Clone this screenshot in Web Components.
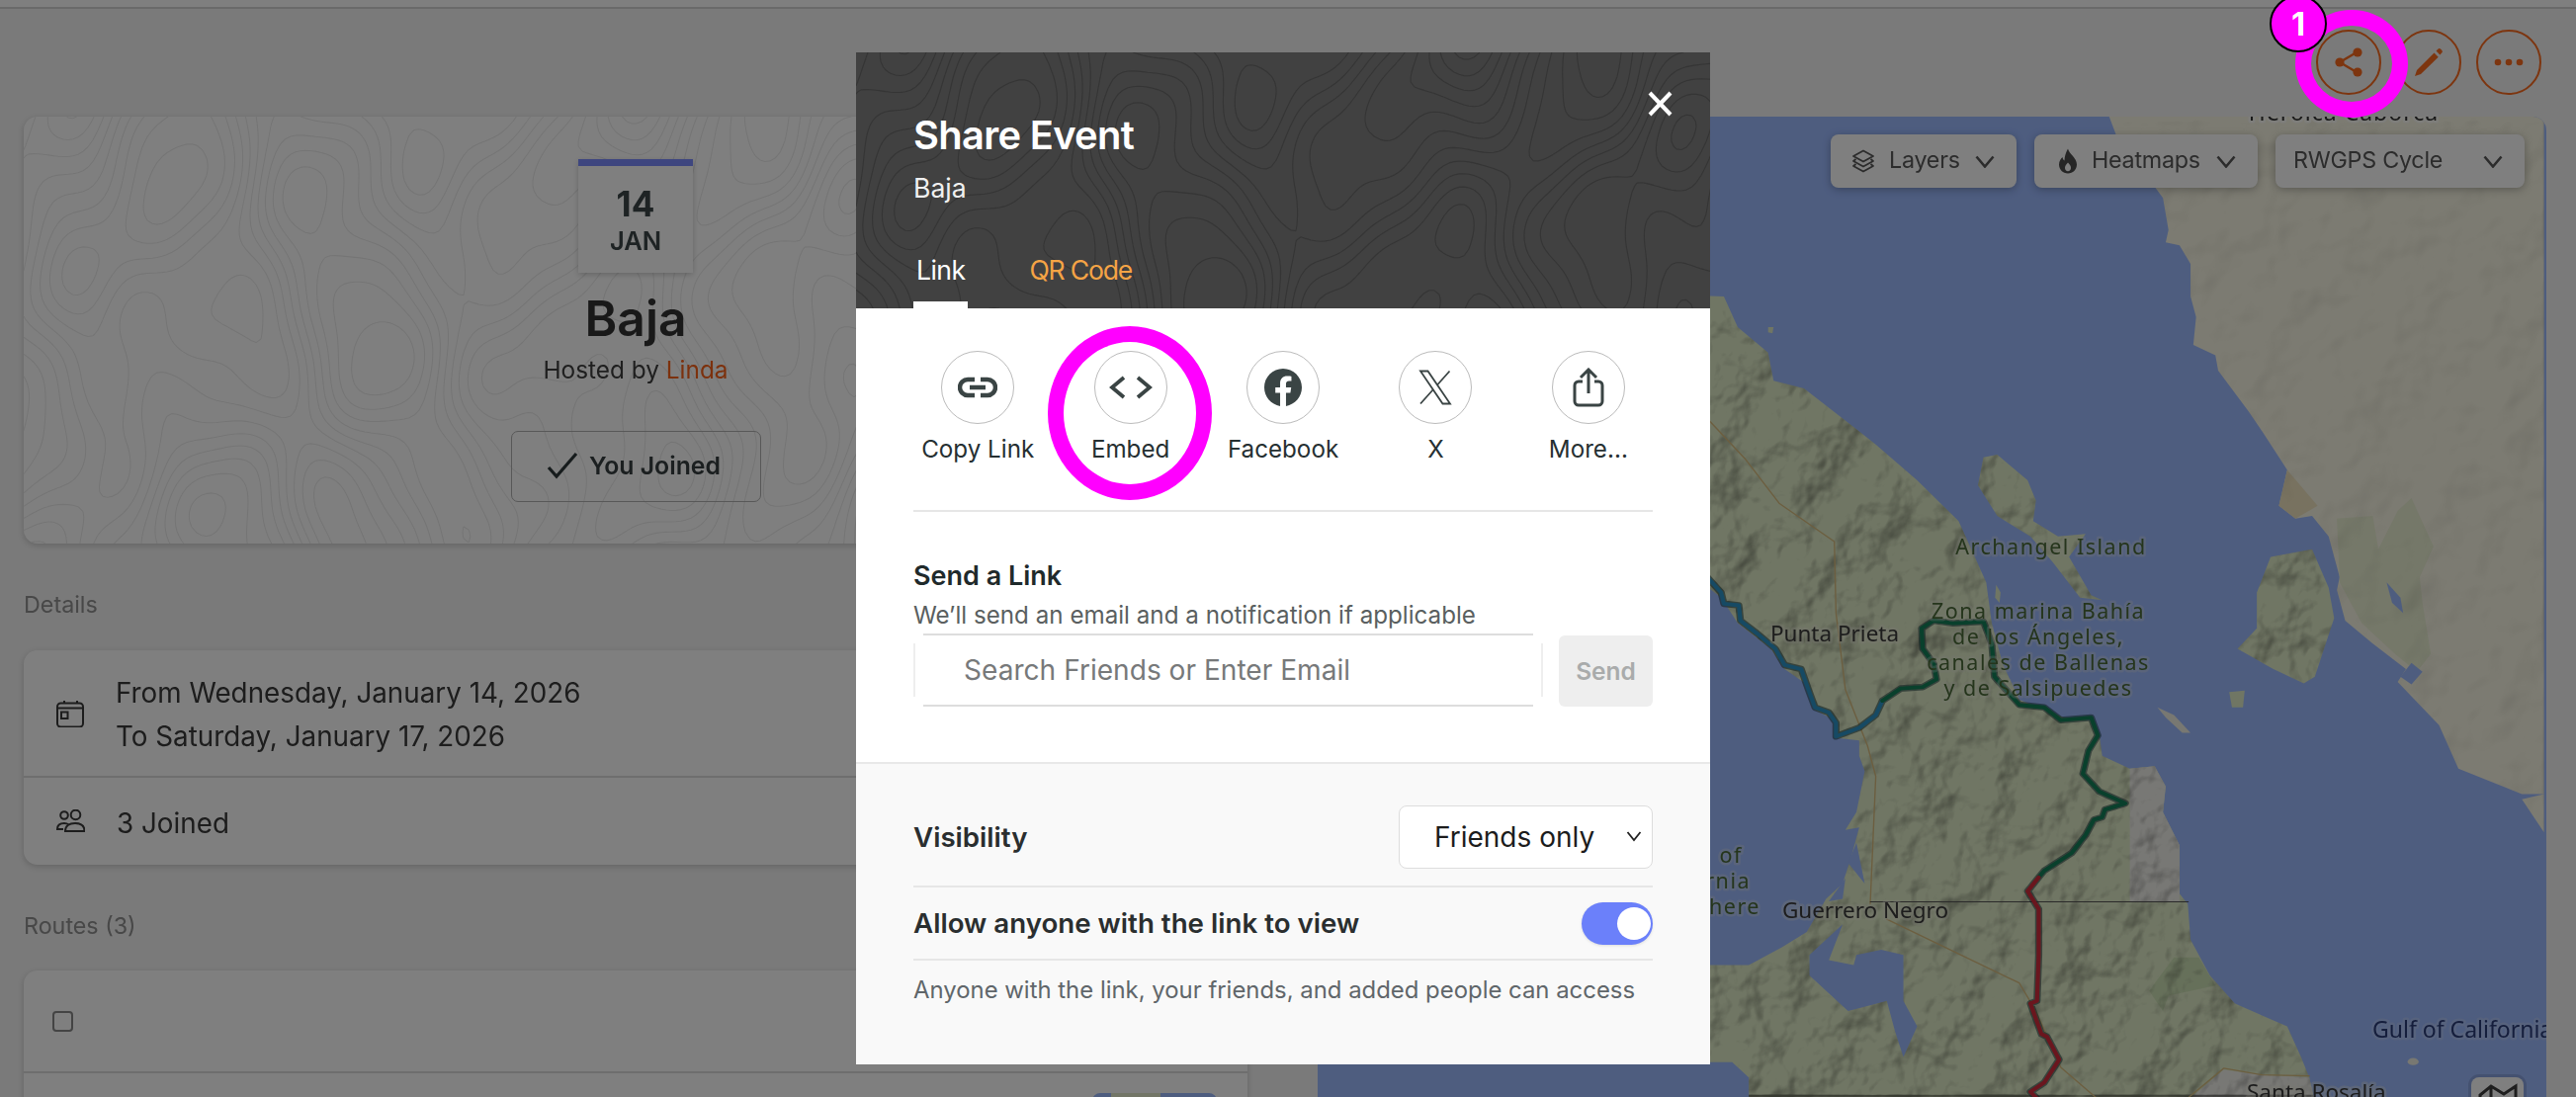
<!DOCTYPE html>
<html lang="en"><head><meta charset="utf-8"><title>Share Event</title>
<style>
html,body{margin:0;padding:0;height:1110px;overflow:hidden;background:#f4f4f4;font-family:Inter,"Liberation Sans",sans-serif}
</style></head><body>
<app-page>
  <top-actions></top-actions>
  <div slot="left">
    <hero-card></hero-card>
    <section-label>Details</section-label>
    <details-card></details-card>
    <section-label style="margin-top:46px">Routes (3)</section-label>
    <routes-card style="margin-top:29px"></routes-card>
  </div>
  <baja-map slot="right"></baja-map>
</app-page>
<dim-overlay></dim-overlay>
<share-dialog></share-dialog>
<callout-ring style="left:1060px;top:330px;width:166px;height:176px"></callout-ring>
<callout-ring style="left:2322px;top:10px;width:114px;height:109px"><step-badge>1</step-badge></callout-ring>
<script>
const FONT='font-family:Inter,"Liberation Sans",sans-serif;';
function topoPath(w,h,ox,oy){
  const s=5,f=(x,y)=>{x=(x+ox)*.88;y=(y+oy)*.8;return Math.sin(x*.016+1.1+1.4*Math.sin(y*.006+.5))*Math.cos(y*.011+.7+Math.sin(x*.009))
    +.5*Math.sin(x*.031+y*.007+2)*Math.sin(y*.023-x*.006+1)+.16*Math.sin(x*.057+y*.021)*Math.cos(y*.043-x*.019)};
  const cols=Math.ceil(w/s)+1,rows=Math.ceil(h/s)+1,g=[];
  for(let j=0;j<=rows;j++){g[j]=[];for(let i=0;i<=cols;i++)g[j][i]=f(i*s,j*s)}
  let d='';
  for(let l=-1.62;l<1.7;l+=.21){
    for(let j=0;j<rows;j++)for(let i=0;i<cols;i++){
      const a=g[j][i],b=g[j][i+1],c=g[j+1][i+1],e=g[j+1][i],p=[];
      const t=(u,v)=>(l-u)/(v-u);
      if((a<l)!==(b<l))p.push([(i+t(a,b))*s,j*s]);
      if((b<l)!==(c<l))p.push([(i+1)*s,(j+t(b,c))*s]);
      if((e<l)!==(c<l))p.push([(i+t(e,c))*s,(j+1)*s]);
      if((a<l)!==(e<l))p.push([i*s,(j+t(a,e))*s]);
      if(p.length>=2)d+=`M${p[0][0].toFixed(1)} ${p[0][1].toFixed(1)}L${p[1][0].toFixed(1)} ${p[1][1].toFixed(1)}`;
      if(p.length==4)d+=`M${p[2][0].toFixed(1)} ${p[2][1].toFixed(1)}L${p[3][0].toFixed(1)} ${p[3][1].toFixed(1)}`;
    }
  }
  return d;
}
function el(name,html){
  customElements.define(name,class extends HTMLElement{
    constructor(){super();this.attachShadow({mode:'open'}).innerHTML=html(this)}
  });
}
el('app-page',()=>`<style>
:host{display:grid;grid-template-columns:1238px 1243px;column-gap:71px;grid-template-rows:118px 992px;padding-left:24px;height:1110px;box-sizing:border-box;width:2606px;overflow:hidden}
.top{grid-column:1 / -1;margin:0 -30px 0 -24px}
</style><div class="top"><slot></slot></div><div class="l"><slot name="left"></slot></div><div class="r"><slot name="right"></slot></div>`);
el('top-actions',()=>`<style>
:host{display:block;height:118px;box-sizing:border-box;background:linear-gradient(#fff 0 7px,#d4d4d4 7px 9px,transparent 9px)}
.row{display:flex;justify-content:flex-end;gap:15px;padding:30px 35px 0 0}
.b{width:66px;height:66px;border:2px solid #fa6a1e;border-radius:50%;box-sizing:border-box;display:flex;align-items:center;justify-content:center}
svg{display:block}
</style><div class="row">
<div class="b"><svg width="32" height="32" viewBox="0 0 32 32"><path d="M24 6 7 16l17 10" fill="none" stroke="#fa6a1e" stroke-width="2.4"/><circle cx="25" cy="6" r="4.6" fill="#fa6a1e"/><circle cx="7" cy="16" r="4.6" fill="#fa6a1e"/><circle cx="25" cy="26" r="4.6" fill="#fa6a1e"/></svg></div>
<div class="b"><svg width="32" height="32" viewBox="0 0 32 32"><path d="M2 30l2-6L21.500 6.500l4.200 4.200L8 28z" fill="#fa6a1e"/><path d="M23.500 4.500l1.800-1.800a2 2 0 0 1 2.900 0l1 1a2 2 0 0 1 0 2.900l-1.800 1.800z" fill="#fa6a1e"/></svg></div>
<div class="b"><svg width="32" height="10" viewBox="0 0 32 10"><circle cx="5" cy="5" r="3.300" fill="#fa6a1e"/><circle cx="16" cy="5" r="3.300" fill="#fa6a1e"/><circle cx="27" cy="5" r="3.300" fill="#fa6a1e"/></svg></div>
</div>`);
el('topo-lines',h=>{const c=h.getAttribute('color')||'#ebebeb';const w=+h.getAttribute('w'),ht=+h.getAttribute('h');
return `<style>:host{position:absolute;inset:0;display:block;overflow:hidden;pointer-events:none}</style>
<svg width="${w}" height="${ht}" viewBox="0 0 ${w} ${ht}"><path d="${topoPath(w,ht,+h.getAttribute('ox')||0,+h.getAttribute('oy')||0)}" fill="none" stroke="${c}" stroke-width="1.100"/></svg>`});
el('hero-card',()=>`<style>
:host{display:flex;flex-direction:column;align-items:center;position:relative;height:432px;padding-top:43px;box-sizing:border-box;background:#fff;border-radius:14px;box-shadow:0 2px 6px rgba(0,0,0,.18);overflow:hidden;color:#3a3a3a}
.in{position:relative;display:flex;flex-direction:column;align-items:center}
.date{width:116px;height:115px;box-sizing:border-box;border-top:7px solid #7c8cff;background:#fff;box-shadow:0 2px 6px rgba(0,0,0,.2);text-align:center;color:#3c4648;padding-top:18px}
.d{font-size:35px;font-weight:700;line-height:40px}.m{font-size:25.500px;font-weight:600;line-height:30px;margin-top:3px}
h1{font-size:49.800px;font-weight:600;line-height:60px;margin:16px 0 0;color:#333}
.host{font-size:24.400px;line-height:34px;margin-top:5px;color:#3f3f3f}.host b{font-weight:400;color:#f8621a}
.btn{margin-top:45px;width:253px;height:72px;box-sizing:border-box;border:1.500px solid #b0b0b0;border-radius:7px;display:flex;align-items:center;justify-content:center;gap:10px;font-size:24.800px;font-weight:600;color:#363e40;padding:0 4px 2px 0}
</style><topo-lines w="1240" h="440" ox="30" oy="60"></topo-lines><div class="in"><div class="date"><div class="d">14</div><div class="m">JAN</div></div>
<h1>Baja</h1><div class="host">Hosted by <b>Linda</b></div>
<div class="btn"><svg width="33" height="28" viewBox="0 0 33 28"><path d="M2 16l8 9L30 2" fill="none" stroke="#2f393b" stroke-width="3.200"/></svg><span>You Joined</span></div></div>`);
el('section-label',()=>`<style>:host{display:block;font-size:23.300px;line-height:32px;color:#909090;margin-top:46px}</style><slot></slot>`);
el('details-card',()=>`<style>
:host{display:block;margin-top:30px;background:#fff;border-radius:14px;box-shadow:0 2px 6px rgba(0,0,0,.18);color:#3a3a3a;font-size:27.800px;line-height:44px}
.r{display:flex;align-items:center;padding-left:33px;gap:32px;box-sizing:border-box}
.a{height:129px;border-bottom:2px solid #ddd}.a>div{padding-top:3px}.b{height:88px}.b>div{padding-top:3px}
svg{display:block;flex:none}
</style><div class="r a"><svg width="28" height="28" viewBox="0 0 28 28" fill="none" stroke="#3a3a3a" stroke-width="2"><rect x="1" y="3.500" width="26" height="24" rx="3.500"/><path d="M1 8.500h26M8 1v3M21 1v3"/><rect x="5" y="12.500" width="6.500" height="6.500"/></svg><div><div>From Wednesday, January 14, 2026</div><div>To Saturday, January 17, 2026</div></div></div>
<div class="r b"><svg width="29" height="24" viewBox="0 0 29 24" fill="none" stroke="#3a3a3a" stroke-width="2"><circle cx="8" cy="6" r="3.800"/><circle cx="19.500" cy="5.500" r="4.800"/><path d="M7 20H1c0-4 3-6 7-6 2 0 3 .4 4.500 1.400M9 22c0-5 4-8 10-8s9.500 3 9.500 8z"/></svg><div>3 Joined</div></div>`);
el('routes-card',()=>`<style>
:host{display:block;background:#fff;border-radius:14px 14px 0 0;box-shadow:0 2px 6px rgba(0,0,0,.18);height:160px}
.a{height:102px;border-bottom:2px solid #ddd;display:flex;align-items:center;padding-left:29px;box-sizing:content-box}
.cb{width:21px;height:21px;border:2px solid #888;border-radius:4px;box-sizing:border-box}
.b{display:flex;justify-content:flex-end;padding:20px 31px 0 0}
.t{width:126px;height:40px;border-radius:8px 8px 0 0;background:linear-gradient(90deg,#9cbaff 0 15%,#e6eccf 15% 55%,#9cbaff 55%)}
</style><div class="a"><div class="cb"></div></div><div class="b"><div class="t"></div></div>`);
el('map-control',h=>`<style>
:host{display:flex;align-items:center;height:54px;box-sizing:border-box;background:#fff;border-radius:8px;box-shadow:0 2px 8px rgba(0,0,0,.28);font-size:23.300px;color:#585858;padding:0 22px 0 21px;gap:14px;letter-spacing:-.25px}
span{flex:1;white-space:nowrap;padding-bottom:3px}svg{display:block;flex:none}
</style><slot name="i"></slot><span><slot></slot></span><svg width="20" height="13" viewBox="0 0 20 13"><path d="M1.500 1.500l8.500 10 8.500-10" fill="none" stroke="#585858" stroke-width="2.600"/></svg>`);
const BAJA="-720,-30 25,0 50,60 105,110 115,165 170,180 265,260 300,290 375,360 450,440 500,560 510,640 530,720 560,790 640,825 690,830 705,860 710,900 760,925 805,920 825,960 820,1010 850,1075 850,1170 865,1190 870,1260 905,1330 950,1385 1045,1430 1070,1490 1085,1530 1095,1580 70,1580 70,1530 40,1500 -10,1500 -10,1310 70,1310 130,1275 175,1245 210,1180 240,1150 255,1100 270,1040 245,1045 265,1010 280,930 270,900 270,870 230,865 225,830 190,810 175,760 135,730 110,690 50,640 20,590 -10,565 -720,300";
const MAIN="720,-360 735,-317 820,-193 830,-130 825,-106 850,-100 870,-64 870,0 880,40 875,95 915,115 920,145 975,225 1000,265 1045,340 1030,410 1060,435 1090,430 1120,470 1140,550 1135,575 1150,635 1200,680 1260,730 1245,755 1320,840 1355,925 1470,975 1510,975 1470,985 1510,1050 1510,-360";
const ANGEL="495,315 520,310 575,360 590,400 585,440 630,470 680,465 650,510 690,585 710,595 670,590 620,520 580,470 520,430 485,370";
const TIB="1015,510 1090,495 1120,570 1130,630 1095,745 1075,758 1020,730 955,690 990,650 990,580";
const T='transform="translate(1730 300) scale(.5587 .5165)"';
const ROUTE1="-5,550 20,580 25,602 52,605 55,635 85,660 118,690 135,722 165,730 178,770 190,805 215,815 228,835 228,862 270,845 300,820 312,792";
const ROUTE2="312,792 345,768 385,765 410,750 405,720 385,690 383,650 405,635 440,640 495,637 510,680 515,745 560,800 605,805 635,830 690,825 702,860 685,890 675,935 705,970 752,993 715,1005 710,1020 695,1025 680,1055 655,1090 605,1125 595,1138";
const ROUTE3="595,1138 575,1165 595,1200 595,1290 592,1380 580,1385 600,1445 610,1450 632,1495 605,1540 580,1558 600,1580";
el('baja-map',()=>`<style>
:host{display:block;position:relative;width:1243px;height:992px;overflow:hidden;border-radius:14px 14px 0 0;background:#9cbaff}
svg.m{display:block}
.ctl{position:absolute;top:18px;right:22px;display:flex;gap:18px}
.style{position:absolute;right:23px;top:972px;width:53px;height:40px;background:#fff;border-radius:8px 8px 0 0;box-shadow:0 0 0 3px rgba(0,0,0,.12);display:flex;justify-content:center;padding-top:6px;box-sizing:border-box}
text{font-family:"Noto Sans","DejaVu Sans",sans-serif;paint-order:stroke;stroke-linejoin:round}
.g{fill:#4a6a38;stroke:rgba(235,235,225,.3);stroke-width:5px;font-size:21.500px;letter-spacing:1.500px}
.p{fill:#3a3a3a;stroke:rgba(240,240,225,.35);stroke-width:5px;font-size:22.500px}
.w{fill:#2a3c78;stroke:rgba(190,205,245,.5);stroke-width:5px;font-size:23px}
</style>
<svg class="m" width="1243" height="992" viewBox="1333 118 1243 992">
<defs>
<filter id="hill" filterUnits="userSpaceOnUse" x="1333" y="118" width="1243" height="992" color-interpolation-filters="sRGB"><feTurbulence type="fractalNoise" baseFrequency=".02 .017" numOctaves="4" seed="7"/><feColorMatrix values="0 0 0 0 0 0 0 0 0 0 0 0 0 0 0 1 0 0 0 0"/><feGaussianBlur stdDeviation="1.200"/><feDiffuseLighting surfaceScale="13" lighting-color="#fff" diffuseConstant="1.180"><feDistantLight azimuth="225" elevation="58"/></feDiffuseLighting></filter>
<filter id="soft" filterUnits="userSpaceOnUse" x="1333" y="118" width="1243" height="992" color-interpolation-filters="sRGB"><feTurbulence type="fractalNoise" baseFrequency=".02 .02" numOctaves="3" seed="12"/><feColorMatrix values="0 0 0 0 0 0 0 0 0 0 0 0 0 0 0 1 0 0 0 0"/><feGaussianBlur stdDeviation="2"/><feDiffuseLighting surfaceScale="6" lighting-color="#fff" diffuseConstant="1.180"><feDistantLight azimuth="225" elevation="58"/></feDiffuseLighting></filter>
<clipPath id="cb2"><polygon ${T} points="${BAJA}"/><polygon ${T} points="${ANGEL}"/><polygon ${T} points="${TIB}"/></clipPath>
<clipPath id="cm2"><polygon ${T} points="${MAIN}"/></clipPath>
</defs>
<g ${T}>
<polygon fill="#f8f6e4" points="${MAIN}"/>
<polygon fill="#e0ecc8" points="${BAJA}"/>
<g fill="#e0ecc8"><polygon points="${ANGEL}"/><polygon points="${TIB}"/><polygon points="940,775 968,772 965,805 945,805"/><polygon fill="#f0f0e4" points="810,805 840,820 870,855 855,855 825,825"/><polygon points="105,60 115,60 113,72 105,70"/><ellipse fill="#f0f0e4" cx="1273" cy="1499" rx="10" ry="7"/><polygon points="518,565 526,580 524,600 516,590"/></g>
<polygon fill="#f0f0ea" points="760,925 805,920 825,960 820,1010 850,1075 850,1185 760,1185"/>
<polygon fill="#f0f0ea" points="860,1580 930,1515 1000,1525 1085,1530 1095,1580"/>
<polygon fill="#cde0b5" points="840,1295 885,1295 915,1350 830,1370 820,1400 795,1360"/>
<polygon fill="#eaf0d2" points="1135,435 1200,430 1210,495 1245,420 1270,395 1310,490 1285,550 1290,600 1305,700 1280,735 1240,700 1180,640 1140,560"/>
<polygon fill="#f0e4c0" points="1045,340 1100,410 1060,435 1030,410"/>
</g>
<g style="mix-blend-mode:multiply;opacity:.22" clip-path="url(#cm2)"><rect x="1333" y="118" width="1243" height="992" filter="url(#soft)"/></g>
<g style="mix-blend-mode:multiply;opacity:.5" clip-path="url(#cb2)"><rect x="1333" y="118" width="1243" height="992" filter="url(#hill)"/></g>
<g ${T}>
<polygon fill="#9cbaff" points="180,1290 240,1230 215,1300 260,1310 265,1290 310,1280 350,1290 350,1380 375,1430 350,1490 335,1440 320,1380 250,1400 180,1330"/>
<polygon fill="#9cbaff" points="215,1185 245,1140 240,1180"/><polygon fill="#9cbaff" points="265,1070 280,1150 250,1110"/>
<polygon fill="#9cbaff" points="1225,560 1250,590 1255,620 1235,600"/><polygon fill="#9cbaff" points="1250,745 1270,718 1290,735 1270,760"/>
</g>
<g ${T} fill="none" stroke-linejoin="round" stroke-linecap="round">
<g stroke="#d8bd80" stroke-width="2.500"><polyline points="0,245 65,320 125,405 225,480 228,620 245,770 285,880 300,940 290,1190"/><polyline points="320,1220 560,1345 590,1400 635,1510 710,1580"/><polyline points="860,1575 930,1512 1000,1525 1085,1527"/></g>
<line x1="290" y1="1186" x2="866" y2="1186" stroke="#555" stroke-width="1.800"/>
<polyline stroke="#16383c" stroke-opacity=".55" stroke-width="13" points="${ROUTE1} ${ROUTE2} ${ROUTE3}"/>
<polyline stroke="#2c94c8" stroke-width="7.500" points="${ROUTE1}"/>
<polyline stroke="#128058" stroke-width="7.500" points="${ROUTE2}"/>
<polyline stroke="#d42c3c" stroke-width="7.500" points="${ROUTE3}"/>
</g>
<text class="p" x="2371" y="122" text-anchor="middle" style="letter-spacing:1px;font-size:23px;fill:#333;stroke:rgba(255,255,255,.7)">Heroica Caborca</text>
<text class="g" x="2075" y="561" text-anchor="middle">Archangel Island</text>
<text class="g" x="2062" y="626" text-anchor="middle">Zona marina Bahía</text>
<text class="g" x="2062" y="652" text-anchor="middle">de los Ángeles,</text>
<text class="g" x="2062" y="678" text-anchor="middle">canales de Ballenas</text>
<text class="g" x="2062" y="704" text-anchor="middle">y de Salsipuedes</text>
<text class="p" x="1856" y="649" text-anchor="middle">Punta Prieta</text>
<text class="p" x="1887" y="929" text-anchor="middle">Guerrero Negro</text>
<text class="g" x="1763" y="873" text-anchor="end">of</text>
<text class="g" x="1771" y="899" text-anchor="end">rnia</text>
<text class="g" x="1781" y="925" text-anchor="end">here</text>
<text class="w" x="2400" y="1050">Gulf of California</text>
<text class="p" x="2273" y="1113">Santa Rosalía</text>
</svg>
<div class="ctl">
<map-control style="width:188px"><svg slot="i" width="24" height="24" viewBox="0 0 24 24" fill="none" stroke="#585858" stroke-width="1.800" stroke-linejoin="round"><path d="M12 1.500 22 7l-10 5.500L2 7z"/><path d="M4.500 10 2 12l10 5.500L22 12l-2.500-2"/><path d="M4.500 15 2 17l10 5.500L22 17l-2.500-2"/></svg>Layers</map-control>
<map-control style="width:226px;padding-left:24px"><svg slot="i" width="20" height="26" viewBox="0 0 20 26"><path fill-rule="evenodd" fill="#4c4c4c" d="M10 .5c1 5 9 9 9 16 0 5-4 9-9 9s-9-4-9-9c0-3.500 2-6 3.500-7.500.3 2 1 3 2 3.500C6.500 8 8 4 10 .5zm0 14c-2 2-3 3.500-3 5.500 0 2 1.300 3.200 3 3.200s3-1.200 3-3.200c0-2-1-3.500-3-5.500z"/></svg>Heatmaps</map-control>
<map-control style="width:252px;padding-left:18px">RWGPS Cycle</map-control>
</div>
<div class="style"><svg width="40" height="20" viewBox="0 0 40 20" fill="none" stroke="#3c3c3c" stroke-width="3"><path d="M2 20V12L13 3l13 8 12-8v17M13 3v17"/></svg></div>`);
el('dim-overlay',()=>`<style>:host{position:fixed;inset:0;background:rgba(0,0,0,.5);display:block}</style>`);
el('tab-item',()=>`<style>:host{display:block;font-size:26.600px;line-height:34px;padding:0 3px 22px;color:#f5a445;font-weight:400;letter-spacing:-.6px}
:host([active]){color:#fff;box-shadow:inset 0 -7px 0 #fff}</style><slot></slot>`);
el('share-target',h=>`<style>
:host{flex:1;display:flex;flex-direction:column;align-items:center;font-size:24.200px;line-height:32px;color:#263032}
.c{width:74px;height:74px;border:1.500px solid #bbb;border-radius:50%;box-sizing:border-box;display:flex;align-items:center;justify-content:center;margin-bottom:10px;background:#fff}
svg{display:block}
</style><div class="c"><slot name="i"></slot></div><slot></slot>`);
el('toggle-switch',()=>`<style>:host{display:block;width:72px;height:43px;border-radius:22px;background:#6b80fa;position:relative;box-shadow:0 1px 3px rgba(0,0,0,.12)}
i{position:absolute;right:2px;top:5px;width:34px;height:33px;border-radius:50%;background:#fff}</style><i></i>`);
el('share-dialog',()=>`<style>
:host{position:absolute;left:866px;top:53px;width:864px;height:1024px;display:flex;flex-direction:column;background:#fff;${FONT}color:#263032;overflow:hidden}
header{position:relative;height:259px;background:#414141;box-sizing:border-box;padding:60px 58px 0;display:flex;flex-direction:column;color:#fff;flex:none}
.hi{position:relative;display:flex;flex-direction:column;height:199px}
h2{margin:0;font-size:39.900px;font-weight:600;line-height:48px;letter-spacing:-.7px}
.sub{font-size:26.600px;line-height:34px;margin-top:12px;color:#f0f0f0}
.tabs{display:flex;gap:59px;margin-top:auto}
.x{position:absolute;right:36px;top:38px;display:block}
.body{flex:none;height:459px;box-sizing:border-box;padding:43px 58px 0}
.targets{display:flex;margin:0 -12px;height:118px}
hr{border:0;border-top:2px solid #e6e6e6;margin:43px 0 0}
h3{margin:48px 0 0;font-size:27px;font-weight:600;line-height:34px;color:#1f2a2b}
.note{font-size:24.200px;line-height:32px;color:#5a5f60;margin-top:7px}
.row{display:flex;gap:16px;margin-top:2px;align-items:flex-end}
.inp{width:637px;height:74px;flex:none;box-sizing:border-box;padding-left:51px;display:flex;align-items:center;font-size:28.100px;color:#77797a;
background:linear-gradient(#ddd,#ddd) 10px 0/617px 2px no-repeat,linear-gradient(#ddd,#ddd) 10px 100%/617px 2px no-repeat,linear-gradient(#eee,#eee) 0 10px/2px 54px no-repeat,linear-gradient(#eee,#eee) 100% 10px/2px 54px no-repeat}
.send{width:95px;height:72px;flex:none;border-radius:6px;background:#eee;color:#a9abab;font-size:24.500px;font-weight:600;display:flex;align-items:center;justify-content:center}
footer{flex:1;background:#f9f9f9;border-top:2px solid #e8e8e8;padding:42px 58px 0}
.line{display:flex;justify-content:space-between;align-items:center}
.lab{font-size:27.700px;font-weight:600;color:#2a2e2f}
.sel{width:257px;height:64px;box-sizing:border-box;background:#fff;border:1.500px solid #ddd;border-radius:8px;display:flex;align-items:center;padding-left:35px;font-size:28px;color:#1c1c1c;position:relative}
.sel svg{position:absolute;right:10px;top:24px}
.l1{padding-bottom:17px;border-bottom:2px solid #e6e6e6}
.l2{height:72px;border-bottom:2px solid #e6e6e6}
.foot{font-size:23.900px;line-height:32px;color:#60666a;margin-top:14px}
</style>
<header><topo-lines color="#353535" w="870" h="260" ox="30" oy="60"></topo-lines>
<svg class="x" width="28" height="28" viewBox="0 0 28 28"><path d="M3 3l21 22M24 3 3 25" stroke="#fff" stroke-width="4" fill="none"/></svg>
<div class="hi"><h2>Share Event</h2><div class="sub">Baja</div><div class="tabs"><tab-item active>Link</tab-item><tab-item style="letter-spacing:-1.200px">QR Code</tab-item></div></div></header>
<div class="body">
<div class="targets">
<share-target><svg slot="i" width="40" height="22" viewBox="0 0 40 22" fill="none" stroke="#3a4444" stroke-width="4.500"><path d="M17 3H10a8 8 0 0 0 0 16h7M23 3h7a8 8 0 0 1 0 16h-7M12 11h16"/></svg>Copy Link</share-target>
<share-target><svg slot="i" width="44" height="24" viewBox="0 0 44 24" fill="none" stroke="#3a4444" stroke-width="3.800"><path d="M15 2 3 12l12 10M29 2l12 10-12 10"/></svg>Embed</share-target>
<share-target><svg slot="i" width="38" height="38" viewBox="0 0 24 24"><path fill="#3a4444" d="M24 12.073c0-6.627-5.373-12-12-12s-12 5.373-12 12c0 5.990 4.388 10.954 10.125 11.854v-8.385H7.078v-3.470h3.047V9.430c0-3.007 1.792-4.669 4.533-4.669 1.312 0 2.686.235 2.686.235v2.953H15.830c-1.491 0-1.956.925-1.956 1.874v2.250h3.328l-.532 3.470h-2.796v8.385C19.612 23.027 24 18.062 24 12.073z"/></svg>Facebook</share-target>
<share-target><svg slot="i" width="34" height="36" viewBox="0 0 34 36" fill="none" stroke="#3a4444" stroke-width="1.800"><path d="M2 1.500h7.500L32 34.500h-7.500zM31.500 1.500 19 15.500M15 20 2 34.500"/></svg>X</share-target>
<share-target><svg slot="i" width="32" height="40" viewBox="0 0 32 40" fill="none" stroke="#3a4444" stroke-width="3"><path d="M10 14H6a4 4 0 0 0-4 4v16a4 4 0 0 0 4 4h20a4 4 0 0 0 4-4V18a4 4 0 0 0-4-4h-4M16 26V3M8 10l8-8 8 8"/></svg>More...</share-target>
</div>
<hr>
<h3>Send a Link</h3>
<div class="note">We’ll send an email and a notification if applicable</div>
<div class="row"><div class="inp">Search Friends or Enter Email</div><div class="send">Send</div></div>
</div>
<footer>
<div class="line l1"><span class="lab">Visibility</span><div class="sel">Friends only<svg width="16" height="12" viewBox="0 0 16 12"><path d="M1.500 2l6.500 8 6.500-8" fill="none" stroke="#222" stroke-width="1.800"/></svg></div></div>
<div class="line l2"><span class="lab">Allow anyone with the link to view</span><toggle-switch></toggle-switch></div>
<div class="foot">Anyone with the link, your friends, and added people can access</div>
</footer>`);
el('callout-ring',()=>`<style>:host{position:absolute;display:block;box-sizing:border-box;border:16px solid #f0f;border-radius:50%}</style><slot></slot>`);
el('step-badge',()=>`<style>:host{position:absolute;left:-42px;top:-31px;width:58px;height:58px;box-sizing:border-box;background:#f0f;border:2.500px solid #000;border-radius:50%;display:flex;align-items:center;justify-content:center;color:#fff;font:700 33px Inter,sans-serif}</style><slot></slot>`);
</script>
</body></html>
